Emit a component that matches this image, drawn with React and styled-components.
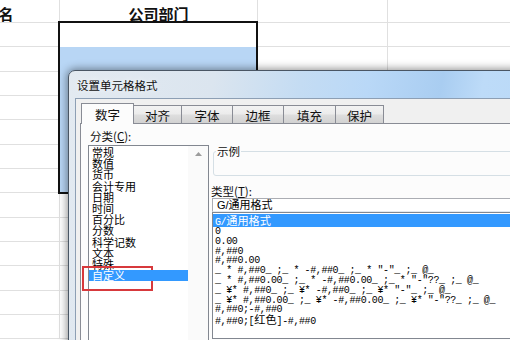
import React from 'react';
import styled, { createGlobalStyle } from 'styled-components';

const GlobalStyle = createGlobalStyle`
  html, body { margin: 0; padding: 0; background: #fff; }
  body {
    width: 510px;
    height: 340px;
    overflow: hidden;
    font-family: "Liberation Sans", "Noto Sans CJK SC", sans-serif;
  }
`;

const Stage = styled.div`
  position: relative;
  width: 510px;
  height: 340px;
  overflow: hidden;
  background: #fff;
`;

/* ---------- spreadsheet behind ---------- */
const Sheet = styled.div`
  display: grid;
  grid-template-columns: 122px 198px 130px 200px;
  grid-template-rows: 23px repeat(13, 24.33px);
  margin-left: -62px;
`;

const Cell = styled.div`
  box-sizing: border-box;
  border-right: 1px solid #e0e0e0;
  border-bottom: 1px solid #e0e0e0;
  display: flex;
  align-items: flex-end;
  justify-content: center;
  font-family: "Noto Sans CJK SC", sans-serif;
  font-weight: ${(p) => (p.$header ? 700 : 400)};
  font-size: 15px;
  line-height: 17px;
  color: #111;
  overflow: hidden;
`;

const Selection = styled.div`
  position: absolute;
  left: 58px;
  top: 21px;
  width: 200px;
  height: 173px;
  box-sizing: border-box;
  border: 2px solid #111;
  display: flex;
  flex-direction: column;
`;

const ActiveCell = styled.div`
  height: 24px;
  background: #fff;
`;

const SelectedFill = styled.div`
  flex: 1;
  background: #b8d6f5;
`;

/* ---------- dialog ---------- */
const Dialog = styled.div`
  position: absolute;
  left: 68px;
  top: 70px;
  width: 470px;
  height: 300px;
  box-sizing: border-box;
  border: 1px solid #4a5664;
  border-radius: 7px 7px 0 0;
  background: linear-gradient(
    100deg,
    #e3eaf1 0%,
    #dbe5ef 28%,
    #c4dcf3 45%,
    #b9d8f7 58%,
    #a9cdf1 72%,
    #bddbf8 80%,
    #b8d8f7 100%
  );
  box-shadow: 0 0 9px 1px rgba(0, 0, 0, 0.45);
  display: flex;
  flex-direction: column;
  padding: 0 6px;
`;

const TitleBar = styled.div`
  height: 27px;
  display: flex;
  align-items: center;
  padding-left: 2px;
  font-family: "Noto Sans CJK SC", sans-serif;
  font-size: 11.5px;
  color: #111;
  text-shadow: 0 0 6px rgba(255, 255, 255, 0.9);
`;

const Client = styled.div`
  flex: 1;
  box-sizing: border-box;
  border: 1px solid #8d9fb4;
  border-bottom: none;
  background: #f0f0f0;
  display: flex;
  flex-direction: column;
  padding: 4px 0 0 4px;
`;

const TabStrip = styled.div`
  display: flex;
  align-items: flex-end;
  height: 20px;
  padding-left: 1px;
`;

const Tab = styled.div`
  position: relative;
  z-index: ${(p) => (p.$active ? 2 : 1)};
  box-sizing: border-box;
  width: ${(p) => p.$w}px;
  height: ${(p) => (p.$active ? 21 : 18)}px;
  margin-bottom: ${(p) => (p.$active ? -1 : 0)}px;
  margin-left: ${(p) => (p.$first ? 0 : -1)}px;
  border: 1px solid #898c95;
  border-bottom: none;
  background: ${(p) =>
    p.$active
      ? '#fcfcfc'
      : 'linear-gradient(#f3f3f3 0%, #ebebeb 48%, #dedede 52%, #d2d2d2 100%)'};
  display: flex;
  align-items: center;
  justify-content: center;
  padding-top: ${(p) => (p.$active ? 1 : 2)}px;
  font-family: "Noto Sans CJK SC", sans-serif;
  font-size: 12.5px;
  color: #111;
`;

const Panel = styled.div`
  flex: 1;
  box-sizing: border-box;
  border: 1px solid #898c95;
  background: #fcfcfc;
  display: grid;
  grid-template-columns: 121px 1fr;
  column-gap: 3px;
  align-items: start;
  padding: 4px 0 0 7px;
`;

const Column = styled.div`
  display: flex;
  flex-direction: column;
`;

const FieldLabel = styled.div`
  height: ${(p) => p.$h || 14}px;
  line-height: ${(p) => p.$h || 14}px;
  margin-left: ${(p) => p.$indent}px;
  margin-top: ${(p) => p.$top || 0}px;
  font-family: "Noto Sans CJK SC", sans-serif;
  font-size: 11.5px;
  color: #111;
  white-space: nowrap;
`;

const ListBox = styled.div`
  box-sizing: border-box;
  height: 220px;
  border: 1px solid #828790;
  background: #fff;
  display: grid;
  grid-template-columns: 1fr 20px;
`;

const Items = styled.div`
  padding-top: 1px;
`;

const CategoryItem = styled.div`
  height: 11.2px;
  line-height: 11.2px;
  padding-left: 3px;
  font-family: "Noto Sans CJK SC", sans-serif;
  font-size: 11px;
  white-space: nowrap;
  color: ${(p) => (p.$selected ? '#fff' : '#000')};
  background: ${(p) => (p.$selected ? '#3399ff' : 'transparent')};
  position: relative;
  z-index: ${(p) => (p.$selected ? 1 : 0)};
`;

const ScrollTrack = styled.div`
  display: flex;
  justify-content: center;
  padding-top: 6px;
  background: #fafafa;
`;

const Group = styled.fieldset`
  box-sizing: border-box;
  height: 32px;
  margin: 16px 0 0 1px;
  padding: 0 2px;
  border: 1px solid #d5dfe5;
  border-radius: 3px;
`;

const Legend = styled.legend`
  padding: 0 1px;
  font-family: "Noto Sans CJK SC", sans-serif;
  font-size: 11.5px;
  line-height: 14px;
  color: #111;
`;

const TextBox = styled.div`
  box-sizing: border-box;
  height: 14px;
  border: 1px solid #abadb3;
  border-bottom-color: #e3e9ef;
  background: #fff;
  padding-left: 4px;
  font-family: "Liberation Sans", "Noto Sans CJK SC", sans-serif;
  font-size: 11px;
  line-height: 12px;
  color: #000;
  white-space: nowrap;
`;

const TypeList = styled.div`
  box-sizing: border-box;
  height: 127px;
  border: 1px solid #828790;
  background: #fff;
  padding-top: 1px;
`;

const TypeRow = styled.div`
  height: ${(p) => (p.$selected ? 13 : 9.8)}px;
  line-height: ${(p) => (p.$selected ? 13 : 9.8)}px;
  padding-left: 2px;
  font-family: "Liberation Mono", "DejaVu Sans Mono", monospace;
  font-size: 10px;
  letter-spacing: -0.4px;
  white-space: pre;
  color: ${(p) => (p.$selected ? '#fff' : '#000')};
  background: ${(p) => (p.$selected ? '#3399ff' : 'transparent')};
`;

const Wide = styled.span`
  font-family: "Noto Sans CJK SC", sans-serif;
  font-size: 11.2px;
  letter-spacing: 0;
`;

const Callout = styled.div`
  position: absolute;
  left: 82px;
  top: 266px;
  width: 71px;
  height: 25px;
  box-sizing: border-box;
  border: 2px solid #d7393c;
`;

/* ---------- data ---------- */
const sheetRows = [['姓名', '公司部门', '', ''], ...Array.from({ length: 13 }, () => ['', '', '', ''])];

const tabs = [
  { label: '数字', w: 53 },
  { label: '对齐', w: 49 },
  { label: '字体', w: 52 },
  { label: '边框', w: 52 },
  { label: '填充', w: 53 },
  { label: '保护', w: 49 },
];

const categories = ['常规', '数值', '货币', '会计专用', '日期', '时间', '百分比', '分数', '科学记数', '文本', '特殊', '自定义'];

const formats = [
  'G/通用格式',
  '0',
  '0.00',
  '#,##0',
  '#,##0.00',
  '_ * #,##0_ ;_ * -#,##0_ ;_ * "-"_ ;_ @_',
  '_ * #,##0.00_ ;_ * -#,##0.00_ ;_ * "-"??_ ;_ @_',
  '_ ¥* #,##0_ ;_ ¥* -#,##0_ ;_ ¥* "-"_ ;_ @_',
  '_ ¥* #,##0.00_ ;_ ¥* -#,##0.00_ ;_ ¥* "-"??_ ;_ @_',
  '#,##0;-#,##0',
  '#,##0;[红色]-#,##0',
];

function renderRuns(text) {
  return text.split(/([\u4e00-\u9fff]+)/).map((part, i) =>
    /[\u4e00-\u9fff]/.test(part) ? <Wide key={i}>{part}</Wide> : <React.Fragment key={i}>{part}</React.Fragment>
  );
}

export default function App() {
  return (
    <>
      <GlobalStyle />
      <Stage>
        <Sheet>
          {sheetRows.map((row, r) =>
            row.map((text, c) => (
              <Cell key={`${r}-${c}`} $header={r === 0}>
                {text}
              </Cell>
            ))
          )}
        </Sheet>

        <Selection>
          <ActiveCell />
          <SelectedFill />
        </Selection>

        <Dialog>
          <TitleBar>设置单元格格式</TitleBar>
          <Client>
            <TabStrip>
              {tabs.map((t, i) => (
                <Tab key={t.label} $w={t.w} $active={i === 0} $first={i === 0}>
                  {t.label}
                </Tab>
              ))}
            </TabStrip>
            <Panel>
              <Column>
                <FieldLabel $h={17} $indent={2}>
                  分类(<u>C</u>):
                </FieldLabel>
                <ListBox>
                  <Items>
                    {categories.map((c) => (
                      <CategoryItem key={c} $selected={c === '自定义'}>
                        {c}
                      </CategoryItem>
                    ))}
                  </Items>
                  <ScrollTrack>
                    <svg width="7" height="4" viewBox="0 0 7 4">
                      <path d="M0 4 L3.5 0 L7 4 Z" fill="#9c9c9c" />
                    </svg>
                  </ScrollTrack>
                </ListBox>
              </Column>
              <Column>
                <Group>
                  <Legend>示例</Legend>
                </Group>
                <FieldLabel $indent={-1} $top={8}>
                  类型(<u>T</u>):
                </FieldLabel>
                <TextBox>G/通用格式</TextBox>
                <TypeList>
                  {formats.map((f, i) => (
                    <TypeRow key={f} $selected={i === 0}>
                      {renderRuns(f)}
                    </TypeRow>
                  ))}
                </TypeList>
              </Column>
            </Panel>
          </Client>
        </Dialog>

        <Callout />
      </Stage>
    </>
  );
}
